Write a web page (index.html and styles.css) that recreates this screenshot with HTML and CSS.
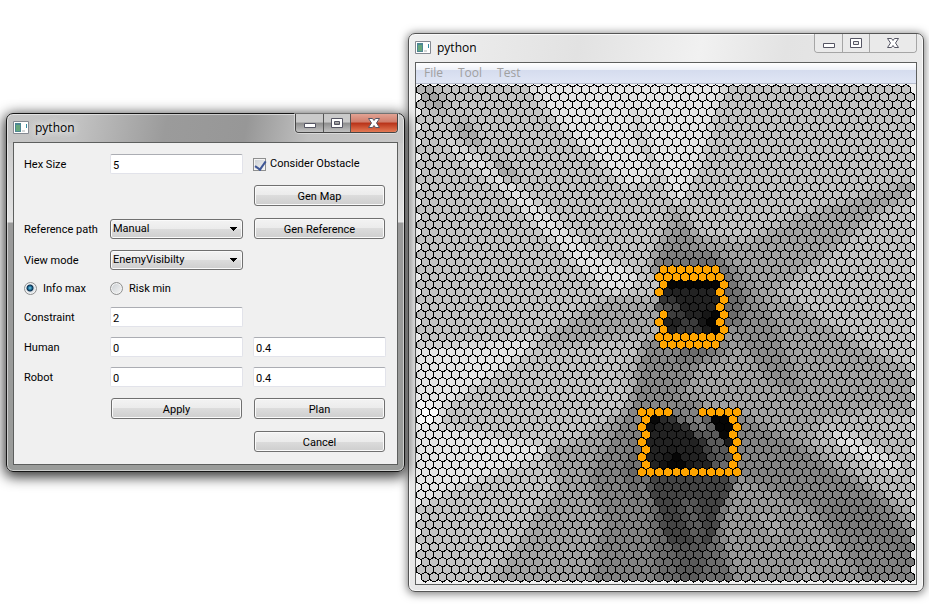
FILE: index.html
```html
<!DOCTYPE html>
<html lang="en">
<head>
<meta charset="utf-8">
<title>python</title>
<link rel="stylesheet" href="styles.css">
</head>
<body>
<main class="desktop">
  <section class="window dialog" aria-label="Settings">
    <header class="titlebar">
      <svg class="app-icon" viewBox="0 0 16 14" aria-hidden="true"><path fill="#fff" stroke="#858991" d="M.5.500h15v12H.5z"/><path fill="#4e8793" d="M2 2h6v9H2z"/><path fill="#65a67c" d="M3 4h4v6H3z"/><path fill="#d5d8d8" d="M9 9h3v2H9z"/><path fill="#358ba0" d="M13 3h1v4h-1z"/></svg>
      <h1 class="title">python</h1>
      <div class="caption">
        <button class="cap cap-min" aria-label="Minimize"><svg viewBox="0 0 14 12"><path d="M1.500 6.500h11v4h-11z"/></svg></button>
        <button class="cap cap-max" aria-label="Maximize"><svg viewBox="0 0 14 12"><path fill-rule="evenodd" d="M1.500 1.500h11v9h-11zM4.500 4.500h5v3h-5z"/></svg></button>
        <button class="cap cap-close" aria-label="Close"><svg viewBox="0 0 14 12"><path d="M1.500 1.500h4L7 3.500l1.500-2h4L9.500 6l3 4.500h-4L7 8.500l-1.500 2h-4l3-4.500z"/></svg></button>
      </div>
    </header>
    <form class="client form">
      <label for="hex">Hex Size</label>
      <input class="field" id="hex" type="text" value="5">
      <label class="choice tick"><input type="checkbox" checked>Consider Obstacle</label>

      <button class="push last" type="button">Gen Map</button>

      <label for="ref">Reference path</label>
      <select class="combo" id="ref"><option>Manual</option></select>
      <button class="push" type="button">Gen Reference</button>

      <label for="view">View mode</label>
      <select class="combo" id="view"><option>EnemyVisibilty</option></select>

      <label class="choice first"><input type="radio" name="goal" checked>Info max</label>
      <label class="choice"><input type="radio" name="goal">Risk min</label>

      <label class="first" for="constraint">Constraint</label>
      <input class="field" id="constraint" type="text" value="2">

      <label class="first" for="human">Human</label>
      <input class="field" id="human" type="text" value="0">
      <input class="field" type="text" value="0.4" aria-label="Human weight">

      <label for="robot">Robot</label>
      <input class="field" id="robot" type="text" value="0">
      <input class="field" type="text" value="0.4" aria-label="Robot weight">

      <button class="push middle" type="button">Apply</button>
      <button class="push" type="button">Plan</button>
      <button class="push last" type="button">Cancel</button>
    </form>
  </section>

  <section class="window viewer" aria-label="Map">
    <header class="titlebar">
      <svg class="app-icon" viewBox="0 0 16 14" aria-hidden="true"><path fill="#fff" stroke="#858991" d="M.5.500h15v12H.5z"/><path fill="#4e8793" d="M2 2h6v9H2z"/><path fill="#65a67c" d="M3 4h4v6H3z"/><path fill="#d5d8d8" d="M9 9h3v2H9z"/><path fill="#358ba0" d="M13 3h1v4h-1z"/></svg>
      <h1 class="title">python</h1>
      <div class="caption">
        <button class="cap cap-min" aria-label="Minimize"><svg viewBox="0 0 14 12"><path d="M1.500 6.500h11v4h-11z"/></svg></button>
        <button class="cap cap-max" aria-label="Maximize"><svg viewBox="0 0 14 12"><path fill-rule="evenodd" d="M1.500 1.500h11v9h-11zM4.500 4.500h5v3h-5z"/></svg></button>
        <button class="cap cap-close" aria-label="Close"><svg viewBox="0 0 14 12"><path d="M1.500 1.500h4L7 3.500l1.500-2h4L9.500 6l3 4.500h-4L7 8.500l-1.500 2h-4l3-4.500z"/></svg></button>
      </div>
    </header>
    <div class="client">
      <nav class="menubar">
        <button type="button">File</button>
        <button type="button">Tool</button>
        <button type="button">Test</button>
      </nav>
      <svg class="map" id="map" viewBox="416 84 500 500" role="img" aria-label="Visibility map"></svg>
    </div>
  </section>
</main>
<script src="map.js"></script>
</body>
</html>
```
FILE: map.js
```js
// Visibility regions, painted in order: grey level, then the outline.
const regions = [
  [228, [[522,80],[640,80],[634,120],[642,150],[656,178],[628,188],[597,160],[560,125]]],
  [228, [[636,80],[729,80],[715,115],[706,150],[693,180],[680,208],[668,188],[652,155],[634,120]]],
  [205, [[634,110],[638,110],[652,150],[636,150]]],
  [226, [[444,138],[452,142],[500,172],[545,210],[590,248],[640,276],[634,287],[612,295],[585,272],[565,252],[535,224],[500,187],[455,153]]],
  [160, [[420,88],[432,88],[446,100],[446,114],[434,108],[424,102]]],
  [160, [[456,122],[470,124],[482,144],[474,146],[460,134]]],
  [160, [[494,158],[504,162],[518,176],[514,184],[502,176]]],
  [228, [[410,347],[480,345],[540,337],[525,354],[505,370],[475,388],[445,408],[430,425],[480,434],[560,448],[520,466],[450,492],[410,510]]],
  [252, [[410,400],[436,408],[446,416],[434,425],[410,422]]],
  // arms of the upper obstacle
  [162, [[675,204],[700,236],[745,243],[800,217],[850,201],[918,180],[918,192],[880,212],[850,236],[830,254],[800,275],[770,300],[720,300],[650,260]]],
  [164, [[662,300],[610,298],[575,318],[536,345],[575,345],[655,335]]],
  [180, [[655,335],[720,335],[750,410],[640,410],[620,370]]],
  [162, [[720,290],[790,300],[860,345],[918,375],[918,415],[870,412],[830,430],[918,485],[918,590],[484,590],[523,537],[560,483],[545,450],[580,440],[640,400],[660,345]]],
  [186, [[824,418],[880,412],[918,432],[918,515],[880,492],[850,470],[810,440]]],
  [226, [[832,430],[850,434],[880,452],[902,465],[898,474],[870,464],[840,446]]],
  [140, [[682,224],[700,245],[735,265],[775,320],[790,365],[805,396],[770,380],[730,330],[650,270],[664,250]]],
  [108, [[650,264],[668,256],[716,256],[745,300],[740,325],[724,325],[700,265]]],
  [134, [[645,340],[734,340],[725,358],[700,365],[672,412],[630,412]]],
  [108, [[680,345],[722,345],[702,360],[676,362]]],
  // lower obstacle surroundings
  [130, [[640,400],[640,475],[735,475],[715,590],[592,590],[604,520],[590,475],[618,427]]],
  [102, [[640,425],[640,510],[625,475]]],
  [104, [[740,418],[760,435],[800,465],[780,472],[740,470]]],
  [132, [[740,415],[790,440],[840,474],[885,500],[918,540],[918,590],[870,590],[810,510],[740,480]]],
  [122, [[830,500],[870,502],[918,545],[918,575],[870,540],[828,520]]],
  [152, [[738,482],[800,510],[858,580],[830,590],[735,590],[724,510]]],
  [178, [[758,512],[775,520],[785,538],[774,536]]],
  [176, [[806,565],[820,575],[812,584],[798,574]]],
  [108, [[650,480],[735,480],[718,530],[738,590],[660,590],[650,530]]],
  [68,  [[644,470],[738,470],[724,500],[714,535],[704,560],[682,570],[664,530]]],
  [90,  [[672,545],[706,545],[704,575],[690,588],[682,588]]],
  [96,  [[680,500],[696,500],[704,535],[700,550],[688,530]]],
  // obstacle interiors
  [35,  [[660,275],[722,275],[722,336],[660,336]]],
  [82,  [[658,302],[674,300],[686,318],[658,314]]],
  [2,   [[668,276],[722,276],[722,287],[668,287]]],
  [4,   [[700,318],[722,312],[722,336],[712,336]]],
  [60,  [[680,320],[696,318],[700,332],[680,334]]],
  [90,  [[644,412],[736,412],[736,468],[644,468]]],
  [35,  [[648,420],[678,420],[702,440],[716,468],[644,468]]],
  [8,   [[648,414],[668,414],[654,430],[648,426]]],
  [130, [[668,398],[702,398],[702,412],[712,430],[700,430],[680,420]]],
  [5,   [[706,416],[736,412],[734,450],[722,436]]],
  [6,   [[676,448],[692,470],[660,470]]]
];

// Occupied cells: row -> inclusive column ranges.
const obstacles = {
  24: [[28,34]], 25: [[27,34]], 26: [[28,28],[35,35]], 27: [[27,27],[34,34]],
  28: [[35,35]], 29: [[34,34]], 30: [[28,28],[35,35]], 31: [[27,27],[34,34]],
  32: [[28,28],[35,35]], 33: [[27,34]], 34: [[28,34]],
  43: [[25,28],[32,36]], 44: [[26,26],[36,36]], 45: [[25,25],[36,36]],
  46: [[26,26],[36,36]], 47: [[25,25],[36,36]], 48: [[26,26],[36,36]],
  49: [[25,25],[36,36]], 50: [[26,26],[36,36]], 51: [[25,36]]
};

const left = 416, top0 = 84, size = 500, radius = 5;
const shade = document.createElement('canvas');
shade.width = shade.height = size;
const ctx = shade.getContext('2d', { willReadFrequently: true });
ctx.fillStyle = 'rgb(194,194,194)';
ctx.fillRect(0, 0, size, size);
for (const [level, points] of regions) {
  ctx.filter = level < 80 ? 'blur(1px)' : 'blur(3px)';
  ctx.fillStyle = `rgb(${level},${level},${level})`;
  ctx.beginPath();
  points.forEach(([x, y]) => ctx.lineTo(x - left, y - top0));
  ctx.fill();
}
const pixels = ctx.getImageData(0, 0, size, size).data;

const halfWidth = radius * Math.sqrt(3) / 2;
let cells = '';
for (let row = 0; row < 66; row++) {
  for (let col = 0; col < 57; col++) {
    const cx = 421 + (col + (row % 2) / 2) * halfWidth * 2;
    const cy = 89.6 + row * radius * 1.5;
    const px = Math.min(size - 1, Math.round(cx - left));
    const py = Math.min(size - 1, Math.round(cy - top0));
    const blocked = (obstacles[row] || []).some(([a, b]) => col >= a && col <= b);
    const v = pixels[(py * size + px) * 4];
    const corners = [[0,-5],[1,-2.5],[1,2.5],[0,5],[-1,2.5],[-1,-2.5]]
      .map(([x, y]) => `${(cx + x * halfWidth).toFixed(2)},${(cy + y).toFixed(2)}`).join(' ');
    cells += `<polygon points="${corners}" fill="${blocked ? 'orange' : `rgb(${v},${v},${v})`}"/>`;
  }
}
document.getElementById('map').innerHTML = cells;
```
FILE: styles.css
```css
* { box-sizing: border-box; }

body {
  margin: 0;
  background: #fff;
  color: #000;
  font: 11px/16px Roboto, "Noto Sans", sans-serif;
}

button, input, select { font: inherit; color: inherit; margin: 0; }

.desktop {
  display: flex;
  align-items: flex-start;
  gap: 3px;
  min-height: 100vh;
  padding: 33px 5px 20px 6px;
  overflow: hidden;
}

.window {
  min-width: 0;
  padding: 0 6px 6px;
  border: 1px solid #555;
  border-radius: 7px;
}

.dialog {
  position: relative;
  z-index: 1;
  flex: 385 1 0;
  margin-top: 80px;
  border-color: #161616;
  background:
    linear-gradient(100deg, #c6c6c6 0, #c2c2c2 18%, #9b9b9b 40%, #979797 60%, #c0c0c0 76%, #c8c8c8 100%) top / 100% 29px no-repeat,
    linear-gradient(#c2c2c2 0, #e4e4e4 108px, #9a9a9a 109px, #9a9c9a 100%);
  box-shadow: inset 0 0 0 1px rgba(255, 255, 255, .5), 0 3px 13px 2px rgba(0, 0, 0, .8);
}

.viewer {
  flex: 502 1 0;
  background: linear-gradient(100deg, #f0f0f0 0, #e2e2e2 28%, #f1f1f1 48%, #e3e3e3 62%, #eee 100%);
  box-shadow: inset 0 0 0 1px #fafafa, 0 1px 8px 1px rgba(0, 0, 0, .5);
}

.titlebar {
  display: flex;
  align-items: center;
  gap: 6px;
  height: 28px;
}

.app-icon { width: 16px; height: 14px; }

.title {
  flex: 1;
  margin: 0;
  font: 12px/16px "Open Sans", sans-serif;
}

.dialog .title { text-shadow: 0 0 8px #fff, 0 0 8px #fff; }

.caption {
  display: flex;
  align-self: flex-start;
  height: 19px;
  border: 1px solid #a5a5a5;
  border-top: 0;
  border-radius: 0 0 4px 4px;
  overflow: hidden;
}

.cap {
  display: flex;
  align-items: center;
  justify-content: center;
  width: 27px;
  padding: 0;
  border: 0;
  border-right: 1px solid #a5a5a5;
  background: #eaeaea;
}

.cap-min { width: 28px; }
.cap-close { width: 46px; border-right: 0; }

.cap svg {
  width: 14px;
  height: 12px;
  fill: #fff;
  stroke: #555563;
}

.dialog .caption { border-color: #454545; box-shadow: 0 0 0 1px rgba(255, 255, 255, .4); }
.dialog .cap { border-color: #555; background: linear-gradient(#cacaca 45%, #8e8e8e 50%, #c2c2c2); }
.dialog .cap-close { background: linear-gradient(#e2a394 0, #d07c6a 45%, #b83218 50%, #e47a55); }

.client { border: 1px solid #5d5f5e; background: #f0f0f0; }

.form {
  display: grid;
  grid-template-columns: 76px 1fr 1fr;
  grid-template-rows: 20px 23px 23px 20px 17px 20px 20px 20px 23px 23px;
  align-items: center;
  gap: 10px;
  padding: 11px 11px 11px 10px;
  white-space: nowrap;
}

.form label:not(.choice) { padding-top: 2px; }

.first { grid-column: 1; }
.middle { grid-column: 2; }
.last { grid-column: 3; }

.field {
  width: 100%;
  min-width: 0;
  height: 20px;
  padding: 2px 2px 0;
  border: 1px solid #e2e3ea;
  border-top-color: #abadb3;
  border-radius: 2px;
  background: #fff;
}

.push, .combo {
  min-width: 0;
  border: 1px solid #707070;
  border-radius: 3px;
  background: linear-gradient(#f3f3f3, #ebebeb 50%, #dcdcdc 50%, #cecece);
  box-shadow: inset 0 0 0 1px #fafafa;
}

.push { height: 21px; margin: 0 1px; padding: 2px 0 0; }

.combo {
  width: 100%;
  height: 20px;
  padding: 0 20px 0 2px;
  appearance: none;
  background:
    linear-gradient(to bottom right, #000 50%, transparent 50%) right 4px center / 4px 4px no-repeat,
    linear-gradient(to bottom left, #000 50%, transparent 50%) right 8px center / 4px 4px no-repeat,
    linear-gradient(#f3f3f3, #ebebeb 50%, #dcdcdc 50%, #cecece);
}

.choice { display: flex; align-items: center; gap: 6px; }
.tick { gap: 4px; }

.choice input {
  appearance: none;
  flex: none;
  width: 13px;
  height: 13px;
  border: 1px solid #8e8f8f;
  background: linear-gradient(135deg, #c9ced2, #f6f6f6);
  box-shadow: inset 0 0 0 1px #f4f4f4;
}

.choice input[type="radio"] { border-radius: 50%; }

.choice input[type="radio"]:checked {
  background: radial-gradient(circle at 5px 5px, #78d4ef 0, #19648e 2px, #0d2f4e 3px, #dde3e8 4px);
}

.choice input[type="checkbox"]:checked::before {
  content: "";
  display: block;
  width: 5px;
  height: 9px;
  margin: 0 0 0 3px;
  border: solid #3f5796;
  border-width: 0 2px 2px 0;
  transform: rotate(35deg);
}

.menubar {
  display: flex;
  gap: 15px;
  height: 21px;
  padding: 0 8px;
  border-bottom: 1px solid #b6bccc;
  background: linear-gradient(#fff, #eef1f8 35%, #d5dcee 36%, #e0e6f5);
  font: 12px/16px "Open Sans", sans-serif;
}

.menubar button {
  padding: 0;
  border: 0;
  background: none;
  color: #a0a0a0;
}

.map { display: block; width: 100%; }

.map polygon {
  stroke: #000;
  stroke-width: 1px;
  stroke-linejoin: bevel;
  shape-rendering: crispEdges;
}
```
